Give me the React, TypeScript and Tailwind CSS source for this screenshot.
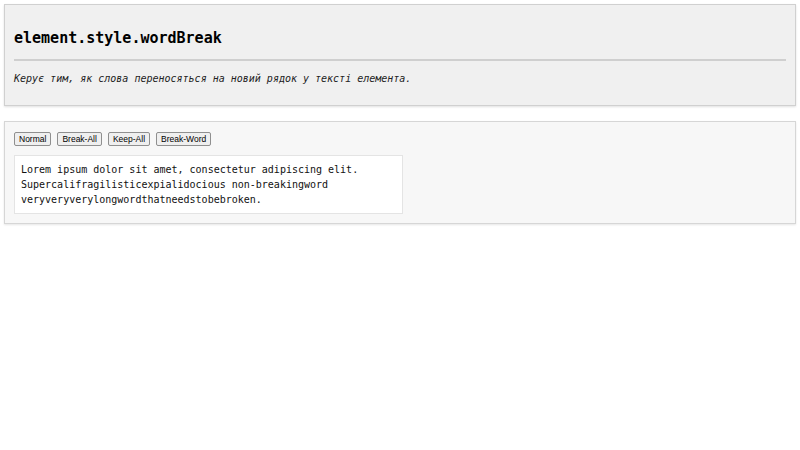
export default function App() {
  const modes = ["Normal", "Break-All", "Keep-All", "Break-Word"];

  return (
    <div className="min-h-[450px] bg-white p-1 font-['DejaVu_Sans_Mono',monospace] text-[#222]">
      {/* Header */}
      <div className="border border-[#d0d0d0] bg-[#f0f0f0] px-[9px] pt-[24px] pb-[20px] shadow-[0_1px_2px_rgba(0,0,0,0.12)]">
        <h1 className="text-[15px] font-bold leading-[18px] text-black">element.style.wordBreak</h1>
        <hr className="mt-[12px] border-t-2 border-[#cfcfcf]" />
        <p className="mt-[12px] text-[10px] italic leading-[12px] text-[#222]">
          Керує тим, як слова переносяться на новий рядок у тексті елемента.
        </p>
      </div>

      {/* Demo */}
      <div className="mt-[15px] border border-[#d6d6d6] bg-[#f7f7f7] px-[9px] pt-[10px] pb-[9px] shadow-[0_1px_2px_rgba(0,0,0,0.1)]">
        <div className="flex gap-[6px]">
          {modes.map((m) => (
            <button
              key={m}
              className="h-[14px] rounded-[2px] border border-[#8f8f8f] bg-[#efefef] px-[4px] font-['Liberation_Sans',Arial,sans-serif] text-[8.5px] leading-[12px] text-black"
            >
              {m}
            </button>
          ))}
        </div>
        <div className="mt-[9px] w-[389px] border border-[#e4e4e4] bg-white p-[6px] text-[10px] leading-[15px] text-[#111]">
          Lorem ipsum dolor sit amet, consectetur adipiscing elit.
          <br />
          Supercalifragilisticexpialidocious non-breakingword
          <br />
          veryveryverylongwordthatneedstobebroken.
        </div>
      </div>
    </div>
  );
}
